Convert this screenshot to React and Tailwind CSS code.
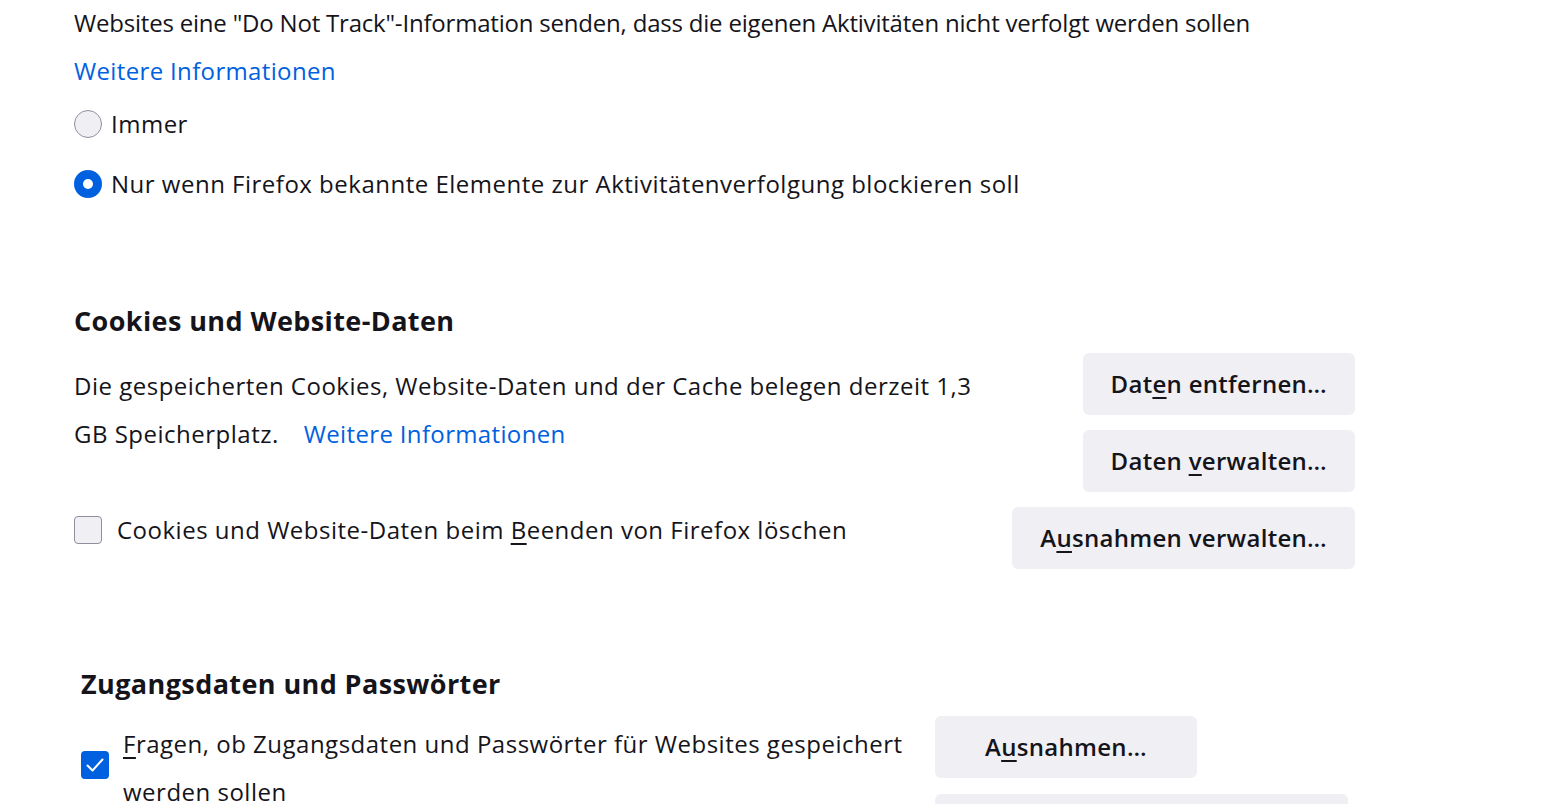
import React from "react";

function Radio({ checked }) {
  return checked ? (
    <span className="box-border inline-block h-[28px] w-[28px] shrink-0 rounded-full border-[9px] border-[#0061e0] bg-white" />
  ) : (
    <span className="box-border inline-block h-[28px] w-[28px] shrink-0 rounded-full border border-[#8f8f9d] bg-[#f0f0f4]" />
  );
}

function Checkbox({ checked, className = "" }) {
  return checked ? (
    <span className={"box-border flex h-[28px] w-[28px] shrink-0 items-center justify-center rounded-[4px] bg-[#0061e0] " + className}>
      <svg width="22" height="22" viewBox="0 0 22 22" fill="none">
        <path d="M3.5 11.5 L8.5 16.5 L18.5 5.5" stroke="white" strokeWidth="2" strokeLinecap="round" strokeLinejoin="round" />
      </svg>
    </span>
  ) : (
    <span className={"box-border inline-block h-[28px] w-[28px] shrink-0 rounded-[4px] border border-[#8f8f9d] bg-[#f0f0f4] " + className} />
  );
}

function Btn({ children }) {
  return (
    <button className="flex h-[62px] items-center justify-center rounded-[6px] bg-[#f0f0f4] px-[28px] text-[24px] font-semibold tracking-[0.3px] text-[#15141a]">
      <span className="whitespace-pre">{children}</span>
    </button>
  );
}

const U = ({ children }) => <span className="underline decoration-[1.5px] underline-offset-[4px]">{children}</span>;

export default function App() {
  return (
    <div
      className="min-h-[804px] w-full overflow-hidden bg-white text-[24px] tracking-[0.5px] text-[#15141a]"
      style={{ fontFamily: '"Open Sans", "Noto Sans", sans-serif' }}
    >
      <div className="box-content w-[1281px] pl-[74px]">
        <div className="-mt-px leading-[48px]">
          <p className="tracking-[-0.2px]">
            Websites eine "Do Not Track"-Information senden, dass die eigenen Aktivitäten nicht verfolgt werden sollen
          </p>
          <p className="tracking-[0.35px] text-[#0061e0]">Weitere Informationen</p>
        </div>

        <div className="mt-[5px] flex flex-col gap-[12px]">
          <label className="flex h-[48px] items-center gap-[9px]">
            <Radio />
            <span>Immer</span>
          </label>
          <label className="flex h-[48px] items-center gap-[9px]">
            <Radio checked />
            <span>Nur wenn Firefox bekannte Elemente zur Aktivitätenverfolgung blockieren soll</span>
          </label>
        </div>

        <h2 className="mt-[95px] text-[27px] font-bold leading-[36px] tracking-[0.4px]">Cookies und Website-Daten</h2>

        <div className="mt-[14px] flex justify-between">
          <div className="w-[920px] pt-[9px]">
            <p className="w-[915px] leading-[48px]">
              Die gespeicherten Cookies, Website-Daten und der Cache belegen derzeit 1,3 GB Speicherplatz.
              <span className="ml-[25px] tracking-[0.35px] text-[#0061e0]">Weitere Informationen</span>
            </p>
            <label className="mt-[48px] flex h-[48px] items-center gap-[15px]">
              <Checkbox />
              <span>
                Cookies und Website-Daten beim <U>B</U>eenden von Firefox löschen
              </span>
            </label>
          </div>
          <div className="flex flex-col items-end gap-[15px]">
            <Btn>
              Dat<U>e</U>n entfernen…
            </Btn>
            <Btn>
              Daten <U>v</U>erwalten…
            </Btn>
            <Btn>
              A<U>u</U>snahmen verwalten…
            </Btn>
          </div>
        </div>

        <div className="pl-[7px]">
          <h2 className="mt-[97px] text-[27px] font-bold leading-[36px] tracking-[0.4px]">Zugangsdaten und Passwörter</h2>
          <div className="mt-[14px] flex items-start gap-[12px]">
            <div className="flex w-[842px] items-start gap-[14px] pt-[4px]">
              <Checkbox checked className="mt-[31px]" />
              <span className="w-[800px] leading-[48px]">
                <U>F</U>ragen, ob Zugangsdaten und Passwörter für Websites gespeichert werden sollen
              </span>
            </div>
            <div className="flex flex-col items-start gap-[16px]">
              <Btn>
                <span className="px-[22px]">
                  A<U>u</U>snahmen…
                </span>
              </Btn>
              <button className="h-[62px] w-[413px] rounded-[6px] bg-[#f0f0f4]" />
            </div>
          </div>
        </div>
      </div>
    </div>
  );
}
